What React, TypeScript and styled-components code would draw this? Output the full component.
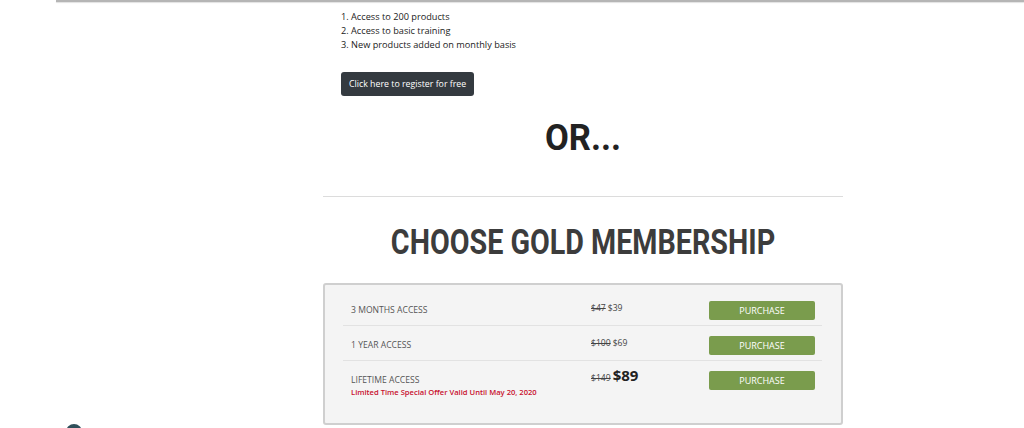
import { styled, createGlobalStyle } from "styled-components";

const GlobalStyle = createGlobalStyle`
  html, body {
    margin: 0;
    padding: 0;
    background: #ffffff;
    font-family: "Open Sans", "Noto Sans", sans-serif;
    overflow: hidden;
  }
`;

type Plan = {
  label: string;
  oldPrice: string;
  price: string;
  big?: boolean;
  note?: string;
};

const plans: Plan[] = [
  { label: "3 Months Access", oldPrice: "$47", price: "$39" },
  { label: "1 Year Access", oldPrice: "$100", price: "$69" },
  {
    label: "Lifetime Access",
    oldPrice: "$149",
    price: "$89",
    big: true,
    note: "Limited Time Special Offer Valid Until May 20, 2020",
  },
];

const App = (): JSX.Element => {
  return (
    <Page>
      <GlobalStyle />
      <TopBar />
      <Main>
        <Intro>
          <List>
            <li>1. Access to 200 products</li>
            <li>2. Access to basic training</li>
            <li>3. New products added on monthly basis</li>
          </List>
          <FreeButton type="button">Click here to register for free</FreeButton>
        </Intro>
        <Or>OR...</Or>
        <Divider />
        <Title>CHOOSE GOLD MEMBERSHIP</Title>
        <PriceBox>
          {plans.map((p, i) => (
            <Row key={p.label} last={i === plans.length - 1}>
              <Label>
                <span>{p.label}</span>
                {p.note && <Note>{p.note}</Note>}
              </Label>
              <Price>
                <s>{p.oldPrice}</s>
                <Now big={p.big}>{p.price}</Now>
              </Price>
              <Buy type="button">PURCHASE</Buy>
            </Row>
          ))}
        </PriceBox>
      </Main>
      <Bubble />
    </Page>
  );
};

export default App;

const Page = styled.div`
  width: 1024px;
  height: 428px;
  position: relative;
  overflow: hidden;
`;

const TopBar = styled.div`
  margin-left: 56px;
  height: 2px;
  background: #b5b5b5;
  box-shadow: 0 1px 1px rgba(0, 0, 0, 0.12);
`;

const Main = styled.div`
  width: 520px;
  margin-left: 323px;
  display: flex;
  flex-direction: column;
`;

const Intro = styled.div`
  padding: 8px 18px 0;
  display: flex;
  flex-direction: column;
  align-items: flex-start;
`;

const List = styled.ul`
  list-style: none;
  margin: 0;
  padding: 0;
  font-size: 9.2px;
  line-height: 14px;
  color: #222;
`;

const FreeButton = styled.button`
  margin-top: 20px;
  height: 24px;
  padding: 0 8px;
  border: none;
  border-radius: 3px;
  background: #343a40;
  color: #ffffff;
  font-family: "Open Sans", "Noto Sans", sans-serif;
  font-size: 8.8px;
`;

const Heading = styled.h2`
  margin: 0;
  text-align: center;
  font-family: Roboto, "Noto Sans", sans-serif;
  font-weight: 700;
  font-size: 35px;
  line-height: 40px;
  transform: scaleX(0.82);
`;

const Or = styled(Heading)`
  margin-top: 22px;
  color: #222;
  font-size: 36px;
  transform: scaleX(0.96);
`;

const Divider = styled.hr`
  margin: 38px 0 0;
  border: none;
  border-top: 1px solid #dcdcdc;
`;

const Title = styled(Heading)`
  margin-top: 26px;
  color: #3c3c3c;
`;

const PriceBox = styled.div`
  margin-top: 20px;
  height: 142px;
  box-sizing: border-box;
  border: 2px solid #cfcfcf;
  border-radius: 3px;
  background: #f4f4f4;
  padding: 6px 19px 0 18px;
`;

const Row = styled.div<{ last?: boolean }>`
  display: grid;
  grid-template-columns: 240px 118px 106px;
  align-items: start;
  padding: 10px 8px 0;
  height: 35px;
  box-sizing: border-box;
  border-bottom: ${(p) => (p.last ? "none" : "1px solid #e2e2e2")};
`;

const Label = styled.div`
  display: flex;
  flex-direction: column;
  padding-top: 3px;
  font-size: 8.6px;
  line-height: 12px;
  color: #555;
  text-transform: uppercase;
`;

const Note = styled.span`
  text-transform: none;
  color: #c8102e;
  font-size: 7.6px;
  font-weight: 600;
  line-height: 13px;
`;

const Price = styled.div`
  display: flex;
  align-items: baseline;
  gap: 2px;
  padding-top: 1px;
  font-size: 8.6px;
  line-height: 12px;
  color: #444;
`;

const Now = styled.span<{ big?: boolean }>`
  font-size: ${(p) => (p.big ? "15px" : "8.6px")};
  font-weight: ${(p) => (p.big ? 700 : 400)};
  color: ${(p) => (p.big ? "#222" : "#444")};
  margin-top: ${(p) => (p.big ? "-4px" : "0")};
`;

const Buy = styled.button`
  width: 106px;
  height: 19px;
  border: none;
  border-radius: 2px;
  background: #7a9c4d;
  color: #ffffff;
  font-family: "Open Sans", "Noto Sans", sans-serif;
  font-size: 9px;
  padding: 0;
`;

const Bubble = styled.div`
  position: absolute;
  left: 66px;
  top: 424px;
  width: 16px;
  height: 16px;
  border-radius: 50%;
  background: #2f4f5a;
`;
